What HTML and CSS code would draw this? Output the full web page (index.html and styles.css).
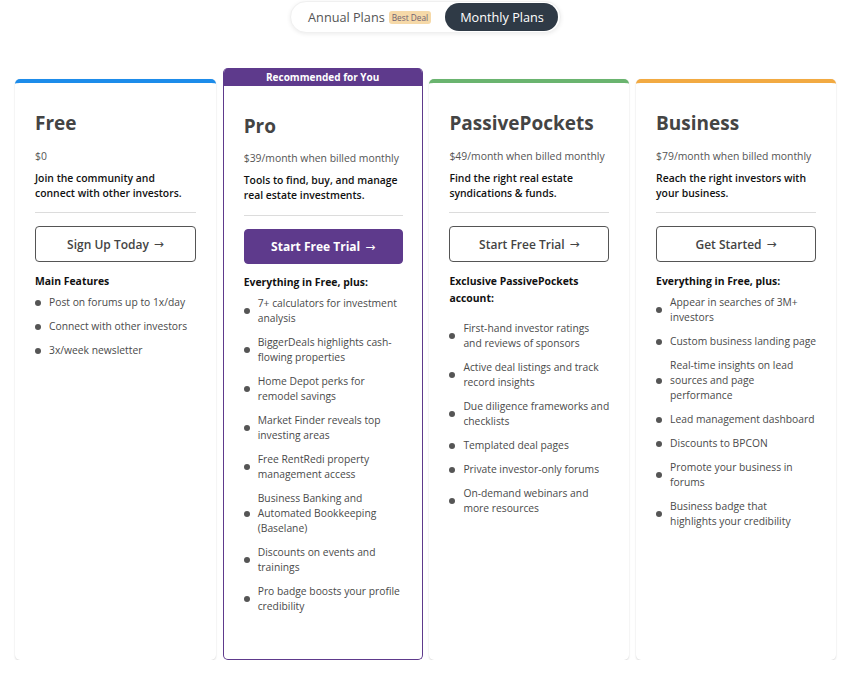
FILE: index.html
```html
<!DOCTYPE html>
<html lang="en">
<head>
<meta charset="utf-8">
<title>Plans</title>
<link rel="stylesheet" href="styles.css">
</head>
<body>
<div class="page">
  <div class="toggle-wrap">
    <div class="toggle">
      <span class="opt">Annual Plans <span class="badge">Best Deal</span></span>
      <span class="opt active">Monthly Plans</span>
    </div>
  </div>
  <div class="cards">
    <div class="card bar-blue">
      <div class="body">
        <h2 class="title">Free</h2>
        <p class="price">$0</p>
        <p class="desc">Join the community and connect with other investors.</p>
        <hr class="divider">
        <a class="btn">Sign Up Today <span class="arrow">&#8594;</span></a>
        <p class="lhead">Main Features</p>
        <ul class="list">
          <li>Post on forums up to 1x/day</li>
          <li>Connect with other investors</li>
          <li>3x/week newsletter</li>
        </ul>
      </div>
    </div>
    <div class="card pro">
      <div class="rec">Recommended for You</div>
      <div class="body">
        <h2 class="title">Pro</h2>
        <p class="price">$39/month when billed monthly</p>
        <p class="desc">Tools to find, buy, and manage real estate investments.</p>
        <hr class="divider">
        <a class="btn btn-fill">Start Free Trial <span class="arrow">&#8594;</span></a>
        <p class="lhead">Everything in Free, plus:</p>
        <ul class="list">
          <li>7+ calculators for investment analysis</li>
          <li>BiggerDeals highlights cash-flowing properties</li>
          <li>Home Depot perks for remodel savings</li>
          <li>Market Finder reveals top investing areas</li>
          <li>Free RentRedi property management access</li>
          <li>Business Banking and Automated Bookkeeping (Baselane)</li>
          <li>Discounts on events and trainings</li>
          <li>Pro badge boosts your profile credibility</li>
        </ul>
      </div>
    </div>
    <div class="card bar-green">
      <div class="body">
        <h2 class="title">PassivePockets</h2>
        <p class="price">$49/month when billed monthly</p>
        <p class="desc">Find the right real estate syndications &amp; funds.</p>
        <hr class="divider">
        <a class="btn">Start Free Trial <span class="arrow">&#8594;</span></a>
        <p class="lhead lhead-pp">Exclusive PassivePockets account:</p>
        <ul class="list">
          <li><span>First-hand investor ratings <span class="nw">and reviews of sponsors</span></span></li>
          <li>Active deal listings and track record insights</li>
          <li>Due diligence frameworks and checklists</li>
          <li>Templated deal pages</li>
          <li>Private investor-only forums</li>
          <li>On-demand webinars and more resources</li>
        </ul>
      </div>
    </div>
    <div class="card bar-orange">
      <div class="body">
        <h2 class="title">Business</h2>
        <p class="price">$79/month when billed monthly</p>
        <p class="desc">Reach the right investors with your business.</p>
        <hr class="divider">
        <a class="btn">Get Started <span class="arrow">&#8594;</span></a>
        <p class="lhead">Everything in Free, plus:</p>
        <ul class="list">
          <li>Appear in searches of 3M+ investors</li>
          <li>Custom business landing page</li>
          <li>Real-time insights on lead sources and page performance</li>
          <li>Lead management dashboard</li>
          <li>Discounts to BPCON</li>
          <li>Promote your business in forums</li>
          <li><span>Business badge that <span class="nw">highlights your credibility</span></span></li>
        </ul>
      </div>
    </div>
  </div>
</div>
</body>
</html>
```
FILE: styles.css
```css
* { box-sizing: border-box; }
html, body { margin: 0; padding: 0; background: #fff; }
body { font-family: "Open Sans", "Noto Sans", sans-serif; color: #444; }

.page { width: 821px; margin-left: 15px; }

.toggle-wrap { display: flex; justify-content: center; padding-top: 1px; }
.toggle {
  display: flex; align-items: center;
  height: 32px; padding: 0 2px 0 17px;
  border-radius: 16px; background: #fff;
  border: 1px solid #f0f0f0;
  box-shadow: 0 1px 4px rgba(0,0,0,0.08);
  gap: 14px;
}
.opt { font-size: 12.7px; color: #555; display: flex; align-items: center; gap: 4px; }
.badge {
  font-size: 8.3px; color: #6f6272; background: #f6d9a8;
  border-radius: 3px; padding: 0 3px; height: 13px; line-height: 13px;
}
.opt.active {
  background: #2f3a46; color: #fff; height: 28px; border-radius: 14px;
  padding: 0 14px 0 15px;
}

.cards {
  display: grid; grid-template-columns: 201px 200px 200px 200px;
  column-gap: 6.7px; margin-top: 35px; align-items: stretch;
}
.card {
  background: #fff; border-radius: 5px;
  box-shadow: 0 1px 2px rgba(0,0,0,0.14), 0 0 1px rgba(0,0,0,0.06);
  margin-top: 11px; border-top: 4px solid #1d8cea;
  height: 581px;
}
.bar-blue { border-top-color: #1d8cea; }
.bar-green { border-top-color: #6ab46f; }
.bar-orange { border-top-color: #f2aa42; }
.card.pro {
  margin-top: 0; border: 1px solid #5e3a8c; border-top: 0;
  box-shadow: none; height: 592px; overflow: hidden;
}
.rec {
  height: 18px; background: #5e3a8c; color: #fff; text-align: center;
  font-size: 10px; font-weight: 700; line-height: 18px;
}
.body { padding: 29px 20px 20px 20px; }
.pro .body { padding: 29px 19px 20px 20px; }

.title { margin: 0; font-size: 19px; font-weight: 700; line-height: 23px; color: #444; }
.price { margin: 14px 0 0; font-size: 10.4px; line-height: 15px; color: #555; }
.pro .price { margin-top: 13px; }
.desc { margin: 7px 0 0; font-size: 10.4px; line-height: 15px; font-weight: 600; color: #111; }
.divider { margin: 11px 0 0; border: 0; border-top: 1px solid #dcdcdc; height: 0; }
.pro .divider { margin-top: 12px; }
.btn {
  display: flex; align-items: center; justify-content: center; gap: 5px;
  margin-top: 13px; height: 36px; border: 1px solid #555; border-radius: 4px;
  font-size: 12px; font-weight: 600; color: #444; text-decoration: none;
}
.btn .arrow { font-size: 12px; font-family: "DejaVu Sans", sans-serif; font-weight: 400; }
.btn-fill { background: #5e3a8c; border-color: #5e3a8c; color: #fff; height: 35px; font-weight: 700; }

.lhead { margin: 11px 0 0; font-size: 10.4px; line-height: 17px; font-weight: 700; color: #111; }
.pro .lhead { margin-top: 10px; }
.lhead-pp { margin-bottom: 14px; }

.list { list-style: none; margin: 5px 0 0; padding: 0; }
.list li {
  display: flex; align-items: center; gap: 8px;
  font-size: 10.3px; line-height: 15px; color: #4a4a4a;
  margin-bottom: 9px;
}
.list li::before {
  content: ""; flex: 0 0 6px; width: 6px; height: 6px; border-radius: 50%;
  background: #555;
}
.nw { white-space: nowrap; }
```
